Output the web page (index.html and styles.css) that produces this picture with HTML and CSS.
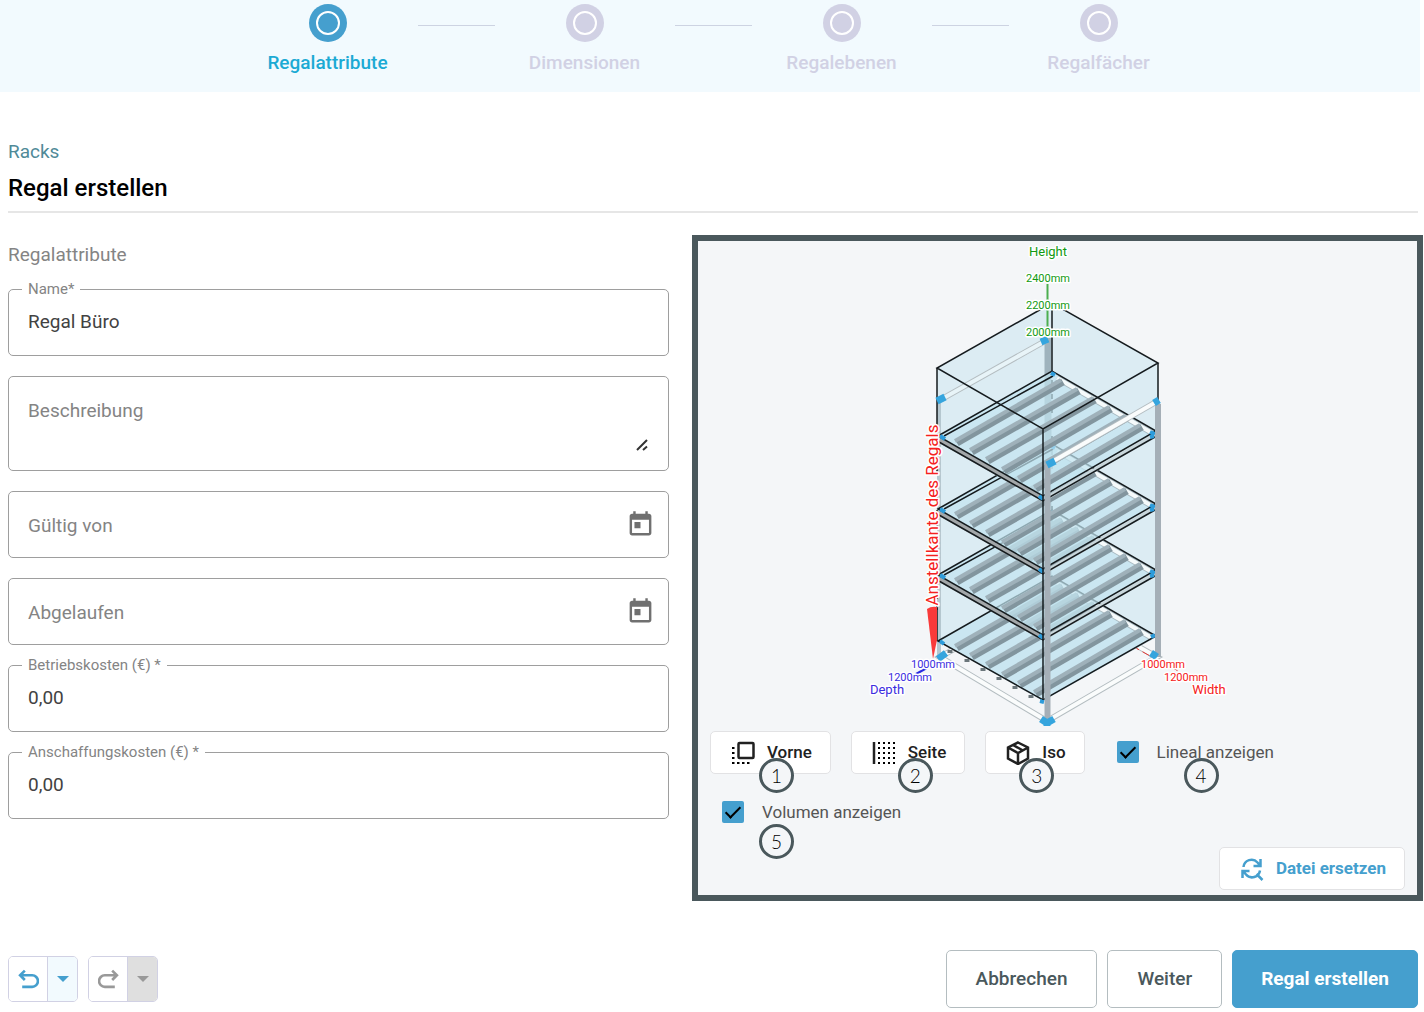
FILE: index.html
```html
<!DOCTYPE html>
<html lang="de">
<head>
    <meta charset="UTF-8">
    <meta name="viewport" content="width=device-width, initial-scale=1.0">
    <title>Regal erstellen</title>
    <link rel="stylesheet" href="styles.css">
</head>
<body>
<!-- Stepper -->
<nav class="stepper">
    <div class="step active"><span class="step-dot"></span>Regalattribute</div>
    <span class="step-line"></span>
    <div class="step"><span class="step-dot"></span>Dimensionen</div>
    <span class="step-line"></span>
    <div class="step"><span class="step-dot"></span>Regalebenen</div>
    <span class="step-line"></span>
    <div class="step"><span class="step-dot"></span>Regalfächer</div>
</nav>

<header class="page-header">
    <a class="breadcrumb" href="#">Racks</a>
    <h1>Regal erstellen</h1>
</header>

<main class="content">
    <!-- Form -->
    <form class="rack-form" id="rackForm">
        <h2>Regalattribute</h2>
        <div class="field floated">
            <label for="name">Name*</label>
            <input type="text" id="name" value="Regal Büro">
        </div>
        <div class="field area">
            <label for="description">Beschreibung</label>
            <textarea id="description"></textarea>
            <svg class="grip" viewBox="0 0 12 12"><path d="M1 11L11 1M7 11L11 7.500" /></svg>
        </div>
        <div class="field">
            <label for="validFrom">Gültig von</label>
            <input type="text" id="validFrom">
            <button type="button" class="date-btn" aria-label="Gültig von">
                <svg viewBox="0 0 24 24"><path d="M19 3h-1V1h-2v2H8V1H6v2H5c-1.110 0-1.990.9-1.990 2L3 19c0 1.100.89 2 2 2h14c1.100 0 2-.9 2-2V5c0-1.100-.9-2-2-2zm0 16H5V8h14v11zM7 10h5v5H7z"/></svg>
            </button>
        </div>
        <div class="field">
            <label for="expired">Abgelaufen</label>
            <input type="text" id="expired">
            <button type="button" class="date-btn" aria-label="Abgelaufen">
                <svg viewBox="0 0 24 24"><path d="M19 3h-1V1h-2v2H8V1H6v2H5c-1.110 0-1.990.9-1.990 2L3 19c0 1.100.89 2 2 2h14c1.100 0 2-.9 2-2V5c0-1.100-.9-2-2-2zm0 16H5V8h14v11zM7 10h5v5H7z"/></svg>
            </button>
        </div>
        <div class="field floated">
            <label for="operatingCost">Betriebskosten (€) *</label>
            <input type="text" id="operatingCost" value="0,00">
        </div>
        <div class="field floated">
            <label for="purchaseCost">Anschaffungskosten (€) *</label>
            <input type="text" id="purchaseCost" value="0,00">
        </div>
    </form>

    <!-- Rack preview -->
    <section class="preview">
        <svg class="rack" viewBox="698 241 719 485">
            <defs>
                <g id="shelf">
                    <path class="glass" d="M0 0L114-65L218-5L105 60z"/>
                    <path class="bar-edge" d="M119-58L214-3"/>
                    <path class="bar-white" d="M119-58L214-3"/>
                    <g class="roller">
                        <path d="M19 7L125-54"/>
                        <path d="M34 16L141-45"/>
                        <path d="M50 25L157-36"/>
                        <path d="M66 35L173-27"/>
                        <path d="M82 44L189-18"/>
                        <path d="M98 53L204-9"/>
                    </g>
                    <g class="roller-light">
                        <path d="M17 5L123-56"/>
                        <path d="M32 14L139-47"/>
                        <path d="M48 23L155-38"/>
                        <path d="M64 33L171-29"/>
                        <path d="M80 42L187-20"/>
                        <path d="M96 51L202-11"/>
                    </g>
                </g>
                <g id="frame">
                    <path class="bar-grey" d="M1 4L105 63"/>
                    <path class="bar-pale" d="M107 63L217-1"/>
                    <path class="edge" d="M0 0L114-65L218-5L105 60z"/>
                    <path class="edge" d="M1 6L105 65L217 1M6 0L115-60"/>
                    <g class="joint">
                        <path d="M2 0l5 3M113-63l4 2M212-4l5 2M212 1l4-1M101 60l4 3"/>
                    </g>
                </g>
            </defs>

            <!-- base rails -->
            <g class="rail-edge">
                <path d="M940 657L1048 596L1157 657L1047 721z"/>
            </g>
            <g class="rail">
                <path d="M940 657L1048 596L1157 657L1047 721z"/>
            </g>
            <path class="ruler-red" d="M1080 616L1150 656"/>

            <!-- volume -->
            <path class="volume" d="M937 368L1052 303L1158 363L1157 637L1043 700L938 641z"/>
            <path class="post-back" d="M1048 338V580"/>
            <path class="post-shade" d="M939 400V658"/>
            <path class="rail-edge" d="M940 400L1047 340"/>
            <path class="rail ghost" d="M940 400L1047 340"/>
            <path class="edge" d="M1052 306V371"/>
            <path class="edge dashed" d="M1052 380V578"/>

            <!-- bottom shelf -->
            <use href="#shelf" x="938" y="641"/>
            <path class="edge" d="M938 641L1052 576L1156 636L1043 700z"/>
            <g class="foot"><path d="M950 650v3M967 659v3M983 668v3M999 677v3M1015 686v3M1031 695v3"/></g>
            <g class="joint"><path d="M940 641l4 3M1151 637l4-2M1040 701l4 1"/></g>

            <use href="#shelf" x="938" y="575"/>
            <use href="#frame" x="938" y="575"/>
            <use href="#shelf" x="938" y="509"/>
            <use href="#frame" x="938" y="509"/>
            <use href="#shelf" x="938" y="436"/>
            <use href="#frame" x="938" y="436"/>

            <!-- posts and volume outline -->
            <path class="post" d="M1158 404V657"/>
            <path class="edge" d="M1158 363V400M937 368V436"/>
            <path class="edge dashed" d="M937 440V610"/>
            <path class="edge" d="M937 606V641"/>
            <path class="post" d="M1047.500 464V720"/>
            <path class="edge" d="M1052 303L937 368L1043 429L1158 363zM1043 429V700"/>
            <path class="rail-edge" d="M1050 463L1156 402"/>
            <path class="rail" d="M1050 463L1156 402"/>
            <g class="joint big">
                <path d="M937 401l8-4M1041 342l7-3M1154 403l5-3M1047 465l8-4M938 659l8-6M1151 653l6 4M1041 719l6 4l7-4M1047 723v3"/>
            </g>

            <!-- rulers -->
            <path class="ruler-green" d="M1047.500 284V330"/>
            <path class="ruler-blue" d="M916 674L936 663"/>
            <path class="ruler-red" d="M1160 661L1180 672"/>
            <path class="arrow" d="M927 609Q931 606 937 607L937 640L933 659z"/>
            <g class="axis green">
                <text class="axis-name" x="1048" y="256">Height</text>
                <text x="1048" y="282">2400mm</text>
                <text x="1048" y="309">2200mm</text>
                <text x="1048" y="336">2000mm</text>
            </g>
            <g class="axis blue">
                <text x="933" y="668">1000mm</text>
                <text x="910" y="681">1200mm</text>
                <text class="axis-name" x="887" y="694">Depth</text>
            </g>
            <g class="axis red">
                <text x="1163" y="668">1000mm</text>
                <text x="1186" y="681">1200mm</text>
                <text class="axis-name" x="1209" y="694">Width</text>
                <text class="wall" transform="translate(938 515) rotate(-90)">Anstellkante des Regals</text>
            </g>
        </svg>

        <div class="controls">
            <div class="control">
                <button type="button" class="view-btn">
                    <svg viewBox="0 0 24 24"><rect class="line" x="7.500" y="2" width="15" height="15" rx="1"/><path class="dots" d="M1 7h2.500M1 12h2.500M1 17h2.500M1 22h2.500M6 22h2.500M11 22h2.500M16 22h2.500"/></svg>
                    Vorne
                </button>
                <span class="badge badge-front">1</span>
            </div>
            <div class="control">
                <button type="button" class="view-btn">
                    <svg viewBox="0 0 24 24"><path class="line" d="M2 1v22"/><path class="dots" d="M6 2h2M11 2h2M16 2h2M21 2h2M6 7h2M11 7h2M16 7h2M21 7h2M6 12h2M11 12h2M16 12h2M21 12h2M6 17h2M11 17h2M16 17h2M21 17h2M6 22h2M11 22h2M16 22h2M21 22h2" /></svg>
                    Seite
                </button>
                <span class="badge badge-side">2</span>
            </div>
            <div class="control">
                <button type="button" class="view-btn">
                    <svg viewBox="0 0 24 24"><path class="line" d="M12 1.500L22 6.500V17.500L12 23L2 17.500V6.500zM2 6.500L12 12L22 6.500M12 12V23M7 4L17 9.500"/></svg>
                    Iso
                </button>
                <span class="badge badge-iso">3</span>
            </div>
            <div class="control">
                <label class="check"><input type="checkbox" checked>Lineal anzeigen</label>
                <span class="badge badge-ruler">4</span>
            </div>
            <div class="control">
                <label class="check"><input type="checkbox" checked>Volumen anzeigen</label>
                <span class="badge badge-volume">5</span>
            </div>
        </div>

        <button type="button" class="view-btn replace-btn">
            <svg viewBox="0 0 24 24"><path class="line" d="M3.500 10A8 8 0 0 1 17.500 5.500L20 8.500M20.500 2V9H13.500M20 13.500A8 8 0 0 1 6 17.500L3.500 14.500M2.500 21V14H9.500M16.500 17L22.500 23"/></svg>
            Datei ersetzen
        </button>
    </section>
</main>

<footer class="actions">
    <div class="split-btn">
        <button type="button" aria-label="Rückgängig">
            <svg viewBox="0 0 20 20"><path d="M6.500 1.500L2 6L6.500 10.500M2 6H13.500a5.500 5.500 0 0 1 0 11H4"/></svg>
        </button>
        <button type="button" class="split-more" aria-label="Verlauf"><span class="caret"></span></button>
    </div>
    <div class="split-btn disabled">
        <button type="button" aria-label="Wiederholen" disabled>
            <svg viewBox="0 0 20 20"><path d="M13.500 1.500L18 6L13.500 10.500M18 6H6.500a5.500 5.500 0 0 0 0 11H16"/></svg>
        </button>
        <button type="button" class="split-more" aria-label="Verlauf" disabled><span class="caret"></span></button>
    </div>
    <div class="main-actions">
        <button type="button" class="btn">Abbrechen</button>
        <button type="button" class="btn">Weiter</button>
        <button type="submit" form="rackForm" class="btn primary">Regal erstellen</button>
    </div>
</footer>
</body>
</html>
```

FILE: styles.css
```css
*, *::after {
    box-sizing: border-box;
}
body {
    margin: 0;
    font-family: Roboto, sans-serif;
    font-size: 19px;
    color: #424242;
    background: #fff;
}
button, input, textarea {
    font: inherit;
    color: inherit;
}
button {
    cursor: pointer;
}

/* Stepper */
.stepper {
    display: flex;
    justify-content: center;
    height: 92px;
    margin-right: 4px;
    padding: 4px 0 0 6px;
    background: #f2fafe;
}
.step {
    display: flex;
    flex-direction: column;
    align-items: center;
    gap: 9px;
    width: 180px;
    line-height: 24px;
    font-weight: 500;
    color: #d1d1e4;
}
.step-dot {
    flex: none;
    width: 38px;
    height: 38px;
    padding: 7px;
    border-radius: 50%;
    background: #d1d1e4;
}
.step-dot::after {
    content: "";
    display: block;
    height: 24px;
    border: 2px solid #fff;
    border-radius: 50%;
}
.step.active { color: #1caad4; }
.step.active .step-dot { background: #459fce; }
.step-line {
    width: 77px;
    height: 1px;
    margin-top: 21px;
    background: #cdd3e2;
}

/* Header */
.page-header {
    margin: 48px 6px 0 8px;
    padding-bottom: 8px;
    border-bottom: 2px solid #e6e6e6;
}
.breadcrumb {
    display: block;
    line-height: 24px;
    color: #508a98;
    text-decoration: none;
}
h1 {
    margin: 9px 0 0;
    font-size: 24px;
    font-weight: 500;
    line-height: 30px;
    color: #000;
}

/* Content */
.content {
    display: grid;
    grid-template-columns: 661fr 731fr;
    gap: 23px;
    align-items: start;
    padding: 22px 1px 0 8px;
}
.rack-form {
    display: flex;
    flex-direction: column;
    gap: 20px;
}
h2 {
    margin: 8px 0 2px;
    font-size: 19px;
    font-weight: 400;
    line-height: 24px;
    color: #848484;
}
.field {
    position: relative;
    display: flex;
    align-items: center;
    height: 67px;
    border: 1px solid #9e9e9e;
    border-radius: 5px;
}
.field.area { height: 95px; }
.field label {
    position: absolute;
    left: 13px;
    top: 22px;
    padding: 0 6px;
    line-height: 24px;
    color: #848484;
    background: #fff;
}
.field.floated label {
    top: -11px;
    font-size: 15px;
    line-height: 20px;
}
.field input, .field textarea {
    flex: 1;
    min-width: 0;
    height: 100%;
    padding: 0 19px 2px;
    border: none;
    border-radius: 5px;
    outline: none;
    background: none;
    resize: none;
}
.field textarea { padding: 22px 19px; }
.grip {
    position: absolute;
    right: 20px;
    bottom: 19px;
    width: 12px;
    height: 12px;
    fill: none;
    stroke: #333;
    stroke-width: 2;
}
.date-btn {
    display: flex;
    margin-right: 13px;
    padding: 0;
    border: none;
    background: none;
}
.date-btn svg {
    width: 29px;
    height: 29px;
    fill: #707070;
}

/* Preview */
.preview {
    display: flex;
    flex-direction: column;
    border: 6px solid #4a585c;
    background: #f4f6f8;
}
.rack {
    display: block;
    width: 100%;
}
.controls {
    display: flex;
    flex-wrap: wrap;
    gap: 18px 20px;
    padding: 5px 12px 0;
}
.control {
    position: relative;
    display: flex;
    height: 42px;
}
.view-btn {
    display: flex;
    align-items: center;
    gap: 12px;
    height: 43px;
    padding: 0 18px 2px 20px;
    border: 1px solid #e2e2e4;
    border-radius: 5px;
    background: #fff;
    font-size: 17px;
    font-weight: 500;
    color: #212121;
}
.view-btn svg {
    width: 24px;
    height: 24px;
    margin-top: 3px;
}
.line {
    fill: none;
    stroke: currentColor;
    stroke-width: 2.500;
}
.view-btn .dots {
    fill: none;
    stroke: #000;
    stroke-width: 2;
}
.check {
    display: flex;
    align-items: center;
    gap: 18px;
    padding-left: 12px;
    font-size: 17px;
    line-height: 20px;
    color: #555;
}
.check input {
    appearance: none;
    width: 22px;
    height: 22px;
    margin: 0;
    border-radius: 2px;
    background: #459fce;
}
.check input:checked::after {
    content: "";
    display: block;
    width: 8px;
    height: 15px;
    margin: 2px 0 0 7px;
    border: solid #000;
    border-width: 0 2px 2px 0;
    transform: rotate(45deg);
}
.badge {
    position: absolute;
    top: 27px;
    width: 35px;
    height: 35px;
    border: 3px solid #4a585c;
    border-radius: 50%;
    background: #f4f6f8;
    font-family: Lato, sans-serif;
    font-size: 19px;
    font-weight: 300;
    line-height: 29px;
    text-align: center;
    color: #000;
}
.badge-front { left: 49px; }
.badge-side { left: 47px; }
.badge-iso { left: 34px; }
.badge-ruler { left: 79px; }
.badge-volume { left: 49px; top: 33px; }
.replace-btn {
    align-self: flex-end;
    margin: 14px 12px 5px 0;
    font-weight: 700;
    color: #459fce;
}

/* Rack drawing */
.edge {
    fill: none;
    stroke: #151b1e;
    stroke-width: 1.500;
}
.dashed { stroke-dasharray: 5 9; }
.volume { fill: #dcecf3; }
.glass { fill: #c2e4ef; fill-opacity: .7; }
.roller { stroke: #82959e; stroke-width: 7; }
.roller-light { stroke: #9fb1ba; stroke-width: 4; }
.bar-edge { stroke: #a9bac1; stroke-width: 6; }
.bar-white { stroke: #f5fafb; stroke-width: 4; }
.bar-grey { stroke: #a3a7a9; stroke-width: 5; }
.bar-pale { stroke: #c8d6db; stroke-width: 4; }
.post { stroke: #a5afb7; stroke-width: 6; }
.post-back { stroke: #9fb3bd; stroke-width: 7; }
.post-shade { stroke: #b5c7cf; stroke-width: 4; }
.rail-edge { fill: none; stroke: #b4bdc1; stroke-width: 6; }
.rail { fill: none; stroke: #fafcfc; stroke-width: 4; }
.ghost { stroke: #e8f4f8; }
.foot { stroke: #6b767b; stroke-width: 5; }
.joint {
    fill: none;
    stroke: #2d9cdb;
    stroke-width: 4;
}
.joint.big {
    stroke: #35a5de;
    stroke-width: 7;
}
.ruler-green { stroke: #4caf50; stroke-width: 2; }
.ruler-blue { stroke: #2a2ae0; stroke-width: 2; }
.ruler-red { stroke: #e53935; stroke-width: 1; stroke-dasharray: 8 4; }
.arrow { fill: #f93a3a; }
.axis {
    font-size: 11px;
    text-anchor: middle;
    stroke: #fff;
    stroke-width: 3;
    stroke-linejoin: round;
    paint-order: stroke;
}
.axis-name { font-size: 13px; }
.wall { font-size: 17px; }
.green { fill: #129a12; }
.blue { fill: #3a2de0; }
.red { fill: #f52020; }

/* Footer */
.actions {
    display: flex;
    align-items: center;
    gap: 10px;
    margin: 49px 6px 0 8px;
}
.split-btn {
    display: flex;
    height: 46px;
    border: 1px solid #d1d1e4;
    border-radius: 5px;
    overflow: hidden;
    color: #459fce;
}
.split-btn button {
    display: flex;
    align-items: center;
    justify-content: center;
    width: 38px;
    padding: 0;
    border: none;
    background: #fff;
}
.split-btn svg {
    width: 21px;
    height: 21px;
    fill: none;
    stroke: currentColor;
    stroke-width: 2.500;
}
.split-btn .split-more {
    width: 30px;
    border-left: 1px solid #d1d1e4;
    background: #f2fafe;
}
.caret {
    border: 6px solid transparent;
    border-top-color: currentColor;
    border-bottom: none;
}
.split-btn.disabled { color: #999; }
.split-btn.disabled .split-more { background: #dfdfdf; }
.main-actions {
    display: flex;
    gap: 10px;
    margin-left: auto;
}
.btn {
    height: 58px;
    padding: 0 29px 2px;
    border: 1px solid #b4bdc0;
    border-radius: 5px;
    background: #fff;
    font-weight: 500;
    color: #4a585c;
}
.btn.primary {
    padding: 0 28px 2px;
    border-color: #459fce;
    background: #459fce;
    font-weight: 700;
    color: #fff;
}
```
